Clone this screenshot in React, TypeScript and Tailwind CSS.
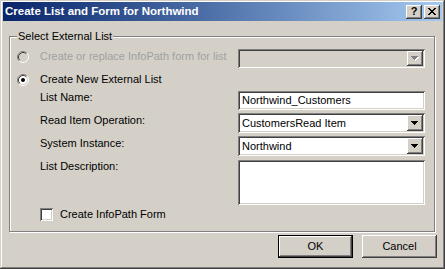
import React from 'react';

const raised =
  'shadow-[inset_-1px_-1px_0_#404040,inset_1px_1px_0_#fff,inset_-2px_-2px_0_#808080,inset_2px_2px_0_#d4d0c8]';
const sunken =
  'shadow-[inset_1px_1px_0_#808080,inset_-1px_-1px_0_#fff,inset_2px_2px_0_#404040,inset_-2px_-2px_0_#d4d0c8]';

const Arrow = ({ disabled = false }: { disabled?: boolean }) => (
  <svg width="8" height="5" viewBox="0 0 8 5" shapeRendering="crispEdges">
    {disabled && (
      <g fill="#fff">
        <rect x="1" y="1" width="7" height="1" />
        <rect x="2" y="2" width="5" height="1" />
        <rect x="3" y="3" width="3" height="1" />
        <rect x="4" y="4" width="1" height="1" />
      </g>
    )}
    <g fill={disabled ? '#808080' : '#000'}>
      <rect x="0" y="0" width="7" height="1" />
      <rect x="1" y="1" width="5" height="1" />
      <rect x="2" y="2" width="3" height="1" />
      <rect x="3" y="3" width="1" height="1" />
    </g>
  </svg>
);

const Radio = ({ checked = false, disabled = false }: { checked?: boolean; disabled?: boolean }) => (
  <svg width="12" height="12" viewBox="0 0 12 12" className="shrink-0">
    <circle cx="6" cy="6" r="4.5" fill={disabled ? '#d4d0c8' : '#fff'} />
    <path d="M2.11 9.89 A5.5 5.5 0 0 1 9.89 2.11" fill="none" stroke="#808080" />
    <path d="M9.89 2.11 A5.5 5.5 0 0 1 2.11 9.89" fill="none" stroke="#fff" />
    <path d="M2.82 9.18 A4.5 4.5 0 0 1 9.18 2.82" fill="none" stroke="#404040" />
    <path d="M9.18 2.82 A4.5 4.5 0 0 1 2.82 9.18" fill="none" stroke="#d4d0c8" />
    {checked && <circle cx="6" cy="6" r="2" fill="#000" />}
  </svg>
);

const Combo = ({ value, disabled = false, className = '' }: { value?: string; disabled?: boolean; className?: string }) => (
  <div
    className={`flex items-stretch p-[2px] ${sunken} ${disabled ? 'bg-[#d4d0c8]' : 'bg-white'} ${className}`}
  >
    <div className="flex-1 flex items-center pl-[2px] leading-[13px] whitespace-nowrap overflow-hidden">{value}</div>
    <div className={`w-[16px] flex items-center justify-center bg-[#d4d0c8] ${raised}`}>
      <Arrow disabled={disabled} />
    </div>
  </div>
);

const Button = ({ label, isDefault = false }: { label: string; isDefault?: boolean }) => (
  <button
    type="button"
    className={`w-[75px] h-[23px] bg-[#d4d0c8] flex items-center justify-center leading-[13px] ${
      isDefault
        ? 'shadow-[inset_0_0_0_1px_#000,inset_-2px_-2px_0_#404040,inset_2px_2px_0_#fff,inset_-3px_-3px_0_#808080]'
        : raised
    }`}
  >
    {label}
  </button>
);

const Label = ({ children }: { children: React.ReactNode }) => (
  <div className="h-[23px] pl-[23px] leading-[13px]">{children}</div>
);

export default function App() {
  return (
    <div className="w-[445px] h-[269px] bg-[#d4d0c8] shadow-[inset_-1px_-1px_0_#404040,inset_1px_1px_0_#d4d0c8,inset_-2px_-2px_0_#808080,inset_2px_2px_0_#fff] px-[3px] pt-[2px] flex flex-col font-['Liberation_Sans',Arial,sans-serif] text-[11px] text-black overflow-hidden">
      {/* title bar */}
      <div className="h-[19px] shrink-0 flex items-center pl-[2px] pr-[2px] bg-linear-to-r from-[#0a246a] to-[#a6caf0]">
        <span className="flex-1 text-white font-bold text-[11.5px] leading-[13px] whitespace-nowrap">
          Create List and Form for Northwind
        </span>
        <div className="flex gap-[2px]">
          <div className={`w-[16px] h-[14px] bg-[#d4d0c8] flex items-center justify-center font-bold text-[11px] leading-none ${raised}`}>
            ?
          </div>
          <div className={`w-[16px] h-[14px] bg-[#d4d0c8] flex items-center justify-center ${raised}`}>
            <svg width="8" height="7" viewBox="0 0 8 7" shapeRendering="crispEdges" fill="#000">
              <rect x="0" y="0" width="2" height="1" />
              <rect x="6" y="0" width="2" height="1" />
              <rect x="1" y="1" width="2" height="1" />
              <rect x="5" y="1" width="2" height="1" />
              <rect x="2" y="2" width="4" height="1" />
              <rect x="3" y="3" width="2" height="1" />
              <rect x="2" y="4" width="4" height="1" />
              <rect x="1" y="5" width="2" height="1" />
              <rect x="5" y="5" width="2" height="1" />
              <rect x="0" y="6" width="2" height="1" />
              <rect x="6" y="6" width="2" height="1" />
            </svg>
          </div>
        </div>
      </div>

      {/* group box */}
      <div className="relative mt-[15px] ml-[6px] w-[426px] h-[196px] shrink-0 border border-[#808080] shadow-[inset_1px_1px_0_#fff,1px_1px_0_#fff] pt-[8px] pl-[7px]">
        <span className="absolute left-[7px] top-[-7px] px-[1px] bg-[#d4d0c8] leading-[13px]">Select External List</span>

        <div className="flex">
          <div className="w-[221px] flex flex-col">
            <div className="h-[23px] flex items-center">
              <Radio disabled />
              <span className="ml-[11px] leading-[13px] text-[#a0a0a0]">Create or replace InfoPath form for list</span>
            </div>
            <div className="h-[23px] flex items-center">
              <Radio checked />
              <span className="ml-[11px] leading-[13px]">Create New External List</span>
            </div>
            <Label>List Name:</Label>
            <Label>Read Item Operation:</Label>
            <Label>System Instance:</Label>
            <Label>List Description:</Label>
          </div>

          <div className="w-[187px] flex flex-col">
            <Combo disabled className="mt-[4px] h-[19px]" />
            <div className={`mt-[23px] h-[19px] bg-white p-[2px] pl-[4px] flex items-center leading-[13px] ${sunken}`}>
              Northwind_Customers
            </div>
            <Combo value="CustomersRead Item" className="mt-[3px] h-[20px]" />
            <Combo value="Northwind" className="mt-[3px] h-[20px]" />
            <div className={`mt-[4px] h-[45px] bg-white ${sunken}`} />
          </div>
        </div>

        <div className="mt-[3px] h-[13px] pl-[23px] flex items-center">
          <div className={`w-[13px] h-[13px] bg-white shrink-0 ${sunken}`} />
          <span className="ml-[7px] leading-[13px]">Create InfoPath Form</span>
        </div>
      </div>

      {/* buttons */}
      <div className="mt-[3px] flex justify-end gap-[9px] pr-[5px]">
        <Button label="OK" isDefault />
        <Button label="Cancel" />
      </div>
    </div>
  );
}
